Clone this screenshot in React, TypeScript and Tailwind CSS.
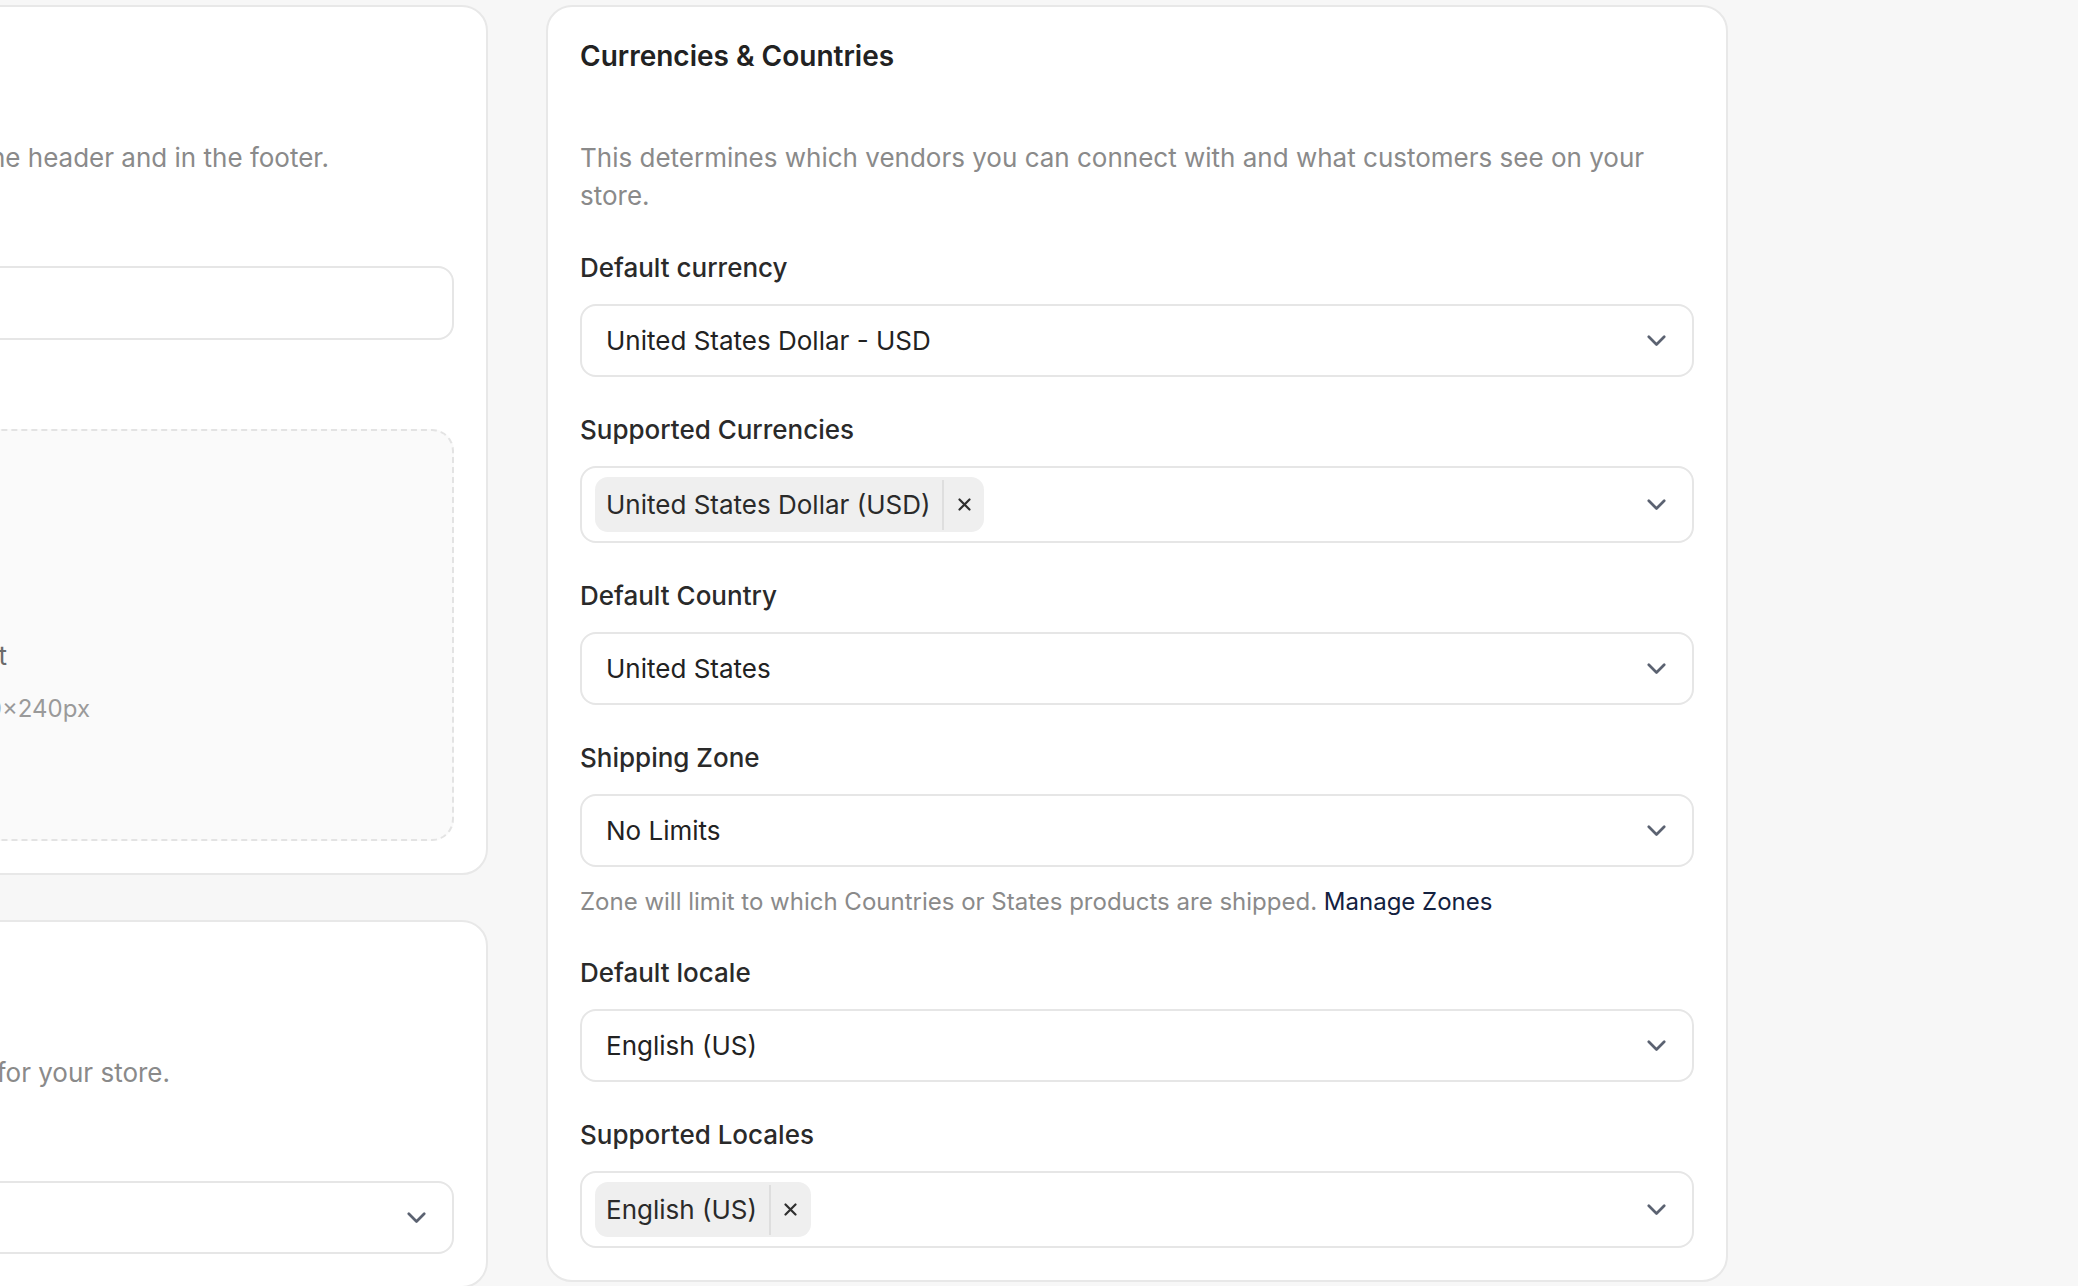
import React from "react";

const FONT = "font-['Inter','Liberation_Sans',sans-serif]";

function Chevron() {
  return (
    <svg width="19" height="12" viewBox="0 0 19 12" fill="none" className="shrink-0">
      <polyline points="1.8,1.8 9.5,9.5 17.2,1.8" stroke="#5b6271" strokeWidth="2.7" strokeLinecap="round" strokeLinejoin="round" />
    </svg>
  );
}

function XIcon() {
  return (
    <svg width="13" height="13" viewBox="0 0 13 13" fill="none">
      <path d="M1.5 1.5 L11.5 11.5 M11.5 1.5 L1.5 11.5" stroke="#2f2f2f" strokeWidth="2.2" strokeLinecap="round" />
    </svg>
  );
}

function Label({ children }: { children: React.ReactNode }) {
  return <div className="text-[26px] leading-[39px] font-medium text-[#2a2a2a]">{children}</div>;
}

function Select({ value }: { value: string }) {
  return (
    <div className="mt-[17px] h-[73px] rounded-[16px] border-2 border-[#e6e6e6] bg-white flex items-center justify-between pl-[24px] pr-[26px]">
      <span className="text-[26px] text-[#222222]">{value}</span>
      <Chevron />
    </div>
  );
}

function MultiSelect({ chip }: { chip: string }) {
  return (
    <div className="mt-[17px] h-[77px] rounded-[16px] border-2 border-[#e6e6e6] bg-white flex items-center justify-between pl-[13px] pr-[26px]">
      <div className="h-[55px] rounded-[13px] bg-[#efefef] flex items-center">
        <span className="pl-[11px] pr-[12px] text-[26px] text-[#2a2a2a]">{chip}</span>
        <span className="h-[50px] w-[2px] bg-[#dedede]" />
        <span className="w-[40px] flex items-center justify-center">
          <XIcon />
        </span>
      </div>
      <Chevron />
    </div>
  );
}

function Field({ label, children }: { label: string; children: React.ReactNode }) {
  return (
    <div className="mt-[33px]">
      <Label>{label}</Label>
      {children}
    </div>
  );
}

function Card({ children, className = "" }: { children: React.ReactNode; className?: string }) {
  return (
    <div className={`rounded-[26px] border-2 border-[#e8e8e8] bg-white p-[32px] ${className}`}>{children}</div>
  );
}

function Title({ children }: { children: React.ReactNode }) {
  return <h2 className="text-[28px] leading-[34.6px] font-semibold text-[#222222]">{children}</h2>;
}

function Desc({ children, className = "" }: { children: React.ReactNode; className?: string }) {
  return <p className={`mt-[65px] text-[26px] leading-[38.4px] text-[#8a8a8a] ${className}`}>{children}</p>;
}

export default function App() {
  return (
    <div className={`h-screen w-full overflow-hidden bg-[#f7f7f7] ${FONT}`}>
      <div className="flex items-start gap-[58px] ml-[-694px] pt-[5px]">
        {/* Left column (partially off-screen) */}
        <div className="w-[1182px] shrink-0 flex flex-col gap-[45px]">
          <Card>
            <Title>Store Logo</Title>
            <Desc className="text-right pr-[125px] whitespace-nowrap">
              Upload your store logo. It will be displayed in the header and in the footer.
            </Desc>
            <Field label="Logo alt text">
              <div className="mt-[17px] h-[74px] rounded-[16px] border-2 border-[#e6e6e6] bg-white" />
            </Field>
            <Field label="Logo">
              <div className="mt-[17px] h-[412px] rounded-[22px] border-2 border-dashed border-[#e3e3e3] bg-[#fafafa] pt-[206px]">
                <div className="text-right pr-[445px] whitespace-nowrap text-[26px] leading-[38.4px] text-[#6b6b6b]">
                  Choose a file or drag and drop it
                </div>
                <div className="mt-[16px] text-right pr-[362px] whitespace-nowrap text-[24px] leading-[36px] text-[#9a9a9a]">
                  PNG, JPG or SVG, recommended 240×240px
                </div>
              </div>
            </Field>
          </Card>
          <Card>
            <Title>Language &amp; Region</Title>
            <Desc className="text-right pr-[284px] whitespace-nowrap">
              Choose the default language and timezone for your store.
            </Desc>
            <Field label="Timezone">
              <Select value="" />
            </Field>
          </Card>
        </div>

        {/* Right card */}
        <Card className="w-[1182px] shrink-0">
          <Title>Currencies &amp; Countries</Title>
          <Desc>
            This determines which vendors you can connect with and what customers see on your store.
          </Desc>
          <Field label="Default currency">
            <Select value="United States Dollar - USD" />
          </Field>
          <Field label="Supported Currencies">
            <MultiSelect chip="United States Dollar (USD)" />
          </Field>
          <Field label="Default Country">
            <Select value="United States" />
          </Field>
          <Field label="Shipping Zone">
            <Select value="No Limits" />
            <p className="mt-[17px] text-[24px] leading-[36px] text-[#8a8a8a]">
              Zone will limit to which Countries or States products are shipped.{" "}
              <a className="text-[#13213f]">Manage Zones</a>
            </p>
          </Field>
          <Field label="Default locale">
            <Select value="English (US)" />
          </Field>
          <Field label="Supported Locales">
            <MultiSelect chip="English (US)" />
          </Field>
        </Card>
      </div>
    </div>
  );
}
